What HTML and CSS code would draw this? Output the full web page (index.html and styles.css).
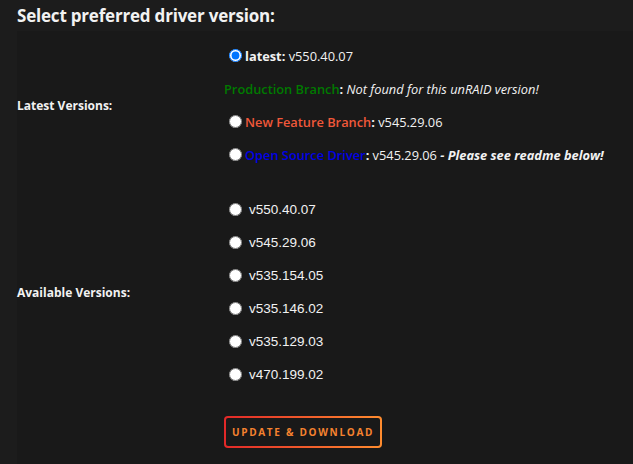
FILE: index.html
```html
<!DOCTYPE html>
<html lang="en">
<head>
    <meta charset="UTF-8">
    <title>Driver version</title>
    <link rel="stylesheet" href="styles.css">
</head>
<body>

    <h2 class="title">Select preferred driver version:</h2>

    <div class="panel">

        <div class="section">
            <div class="label">Latest Versions:</div>
            <div class="options">
                <label class="line">
                    <input type="radio" name="drv" value="latest" checked>
                    <span><b>latest:</b> v550.40.07</span>
                </label>
                <div class="line">
                    <span><b class="prod">Production Branch</b><b>:</b> <i>Not found for this unRAID version!</i></span>
                </div>
                <label class="line">
                    <input type="radio" name="drv" value="nfb">
                    <span><b class="nfb">New Feature Branch</b><b>:</b> v545.29.06</span>
                </label>
                <label class="line">
                    <input type="radio" name="drv" value="open">
                    <span><span class="oss">Open Source Driver</span><b>:</b> v545.29.06 <b><i>- Please see readme below!</i></b></span>
                </label>
            </div>
        </div>

        <div class="section">
            <div class="label">Available Versions:</div>
            <div class="options versions">
                <label class="line"><input type="radio" name="drv" value="550.40.07"><span>v550.40.07</span></label>
                <label class="line"><input type="radio" name="drv" value="545.29.06"><span>v545.29.06</span></label>
                <label class="line"><input type="radio" name="drv" value="535.154.05"><span>v535.154.05</span></label>
                <label class="line"><input type="radio" name="drv" value="535.146.02"><span>v535.146.02</span></label>
                <label class="line"><input type="radio" name="drv" value="535.129.03"><span>v535.129.03</span></label>
                <label class="line"><input type="radio" name="drv" value="470.199.02"><span>v470.199.02</span></label>
            </div>
        </div>

        <div class="section">
            <div></div>
            <div class="actions">
                <button class="btn" type="button">Update &amp; Download</button>
            </div>
        </div>

    </div>

</body>
</html>
```

FILE: styles.css
```css
* {
    box-sizing: border-box;
}

body {
    margin: 0;
    background-color: #1c1c1c;
    color: #f2f2f2;
    font-family: 'Open Sans', 'Liberation Sans', sans-serif;
    font-size: 12.8px;
    height: 464px;
    overflow: hidden;
    display: flex;
    flex-direction: column;
}

.title {
    margin: 0;
    padding: 5px 17px 4px;
    font-size: 17px;
    font-weight: 700;
    line-height: 22px;
    color: #f2f2f2;
    letter-spacing: -0.2px;
}

.panel {
    flex: 1;
    margin-left: 17px;
    background-color: #191919;
    padding-top: 8px;
}

.section {
    display: grid;
    grid-template-columns: 207px 1fr;
    align-items: center;
    margin-bottom: 22px;
}

.label {
    font-weight: 700;
    font-size: 12px;
}

.options {
    display: flex;
    flex-direction: column;
}

.line {
    display: flex;
    align-items: center;
    height: 33px;
}

.line input {
    margin: 0 3px 0 5px;
    width: 13px;
    height: 13px;
}

.prod {
    color: #007a00;
    font-weight: 600;
}

.nfb {
    color: #f0583a;
    font-weight: 600;
}

.oss {
    color: #0000e6;
    font-weight: 600;
}

.versions .line {
    font-family: 'Liberation Sans', Arial, sans-serif;
    font-size: 13.5px;
}

.versions .line input {
    margin-right: 7px;
}

.actions {
    padding-top: 3px;
}

.btn {
    width: 158px;
    height: 32px;
    padding: 0;
    border-radius: 4px;
    border: 2px solid transparent;
    background:
        linear-gradient(#191919, #191919) padding-box,
        linear-gradient(90deg, #e22828, #ff8c2f) border-box;
    font-family: 'Open Sans', 'Liberation Sans', sans-serif;
    font-size: 10px;
    font-weight: 700;
    letter-spacing: 1.7px;
    white-space: nowrap;
    text-transform: uppercase;
    color: #f5822f;
    cursor: pointer;
}
```
